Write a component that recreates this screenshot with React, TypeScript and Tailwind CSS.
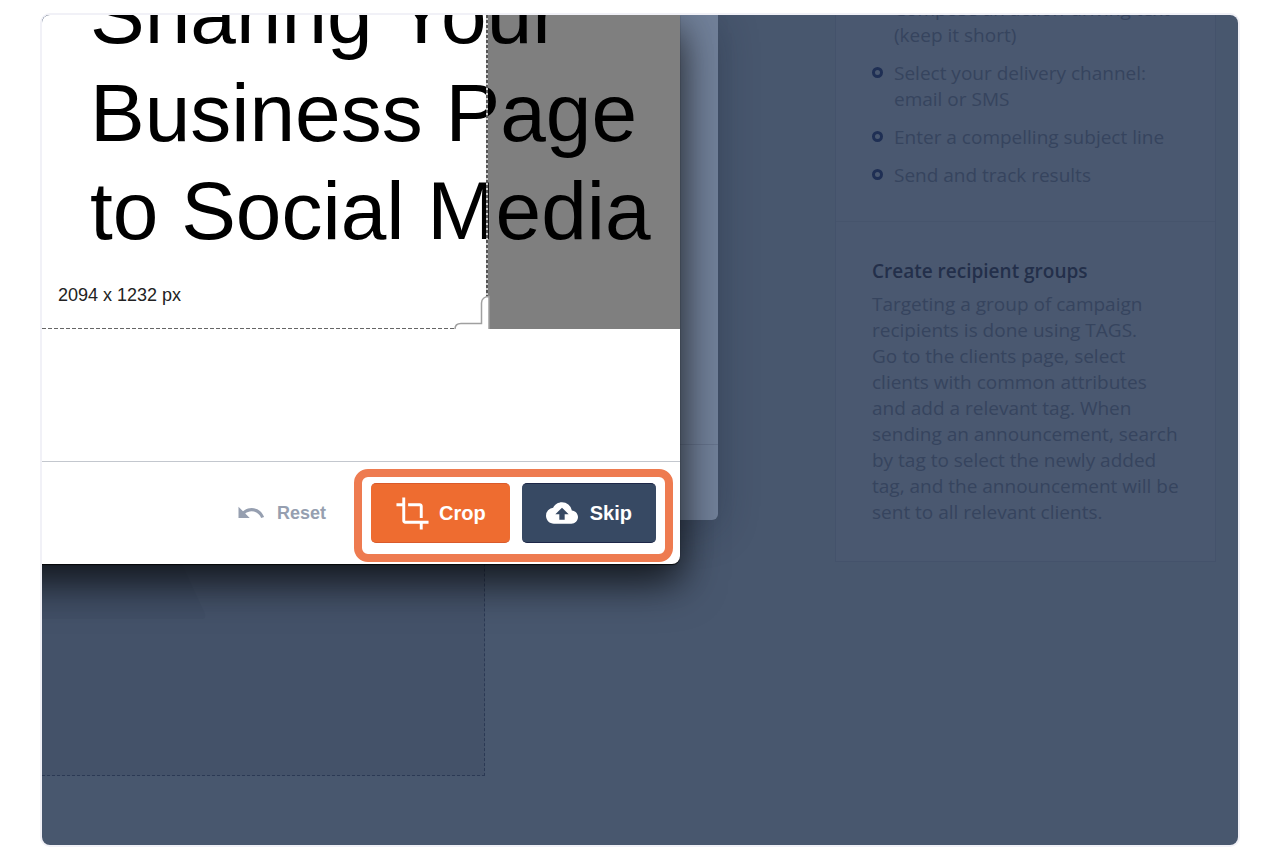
import { MdCloudUpload, MdCrop, MdUndo } from "react-icons/md";

const tips = [
  "Compose an action-driving text\n(keep it short)",
  "Select your delivery channel:\nemail or SMS",
  "Enter a compelling subject line",
  "Send and track results",
];

const groupsText = `Targeting a group of campaign
recipients is done using TAGS.
Go to the clients page, select
clients with common attributes
and add a relevant tag. When
sending an announcement, search
by tag to select the newly added
tag, and the announcement will be
sent to all relevant clients.`;

function Sidebar() {
  return (
    <aside className="mr-[22px] w-[381px] shrink-0 border-x border-b border-[#44526b] bg-[#4a5870] text-[19px] leading-[26px] text-[#36445e]">
      <section className="flex h-[207px] flex-col justify-end overflow-hidden border-b border-[#46546c] px-9 pb-[33px]">
        <ul className="flex flex-col gap-3">
          {tips.map((tip) => (
            <li key={tip} className="flex gap-[11px]">
              <span className="mt-[7px] size-[11px] shrink-0 rounded-full border-3 border-[#1f2f54]" />
              <span className="whitespace-pre">{tip}</span>
            </li>
          ))}
        </ul>
      </section>
      <section className="px-9 py-9">
        <h2 className="font-semibold text-[#232f4a]">Create recipient groups</h2>
        <p className="mt-[7px] whitespace-pre">{groupsText}</p>
      </section>
    </aside>
  );
}

function CropArea() {
  return (
    <div className="relative h-[314px] overflow-hidden">
      <div className="flex h-full flex-col justify-end">
        <h1 className="pl-[48px] text-[82px] leading-[98px] whitespace-pre text-black">
          {"Sharing Your\nBusiness Page\nto Social Media"}
        </h1>
        <p className="mt-[22px] mb-[20px] pl-4 text-[18px] leading-[27px] text-[#222]">2094 x 1232 px</p>
      </div>
      <div className="absolute inset-0 flex">
        <div className="relative flex-1">
          <div className="absolute inset-x-0 bottom-0 h-px bg-[repeating-linear-gradient(90deg,#666_0_4px,#fff_4px_6px)]" />
          <div className="absolute inset-y-0 right-0 w-[2px] bg-[repeating-linear-gradient(180deg,#555_0_3px,#ccc_3px_5px)]" />
          <svg
            className="absolute -right-[2px] bottom-0"
            width="36"
            height="34"
            viewBox="0 0 36 34"
            aria-hidden="true"
          >
            <path
              d="M1 34C1 30.500 3.500 28.500 7 28.500H27.500V8C27.500 4 30.500 1.500 35 1.500V34Z"
              fill="#fff"
            />
            <path
              d="M1 34C1 30.500 3.500 28.500 7 28.500H27.500V8C27.500 4 30.500 1.500 35 1.500V34"
              fill="none"
              stroke="#a0a0a0"
              strokeWidth="1.500"
            />
          </svg>
        </div>
        <div className="w-[192px] bg-black/50" />
      </div>
    </div>
  );
}

function CropDialog() {
  return (
    <div
      role="dialog"
      aria-label="Crop image"
      className="absolute top-0 -left-20 w-[718px] rounded-br-lg bg-white pl-20 font-['Liberation_Sans',Arial,sans-serif] shadow-[0_1px_1px_rgba(0,0,0,0.8),0_18px_44px_rgba(0,0,0,0.6),0_14px_32px_rgba(0,0,0,0.3)]"
    >
      <CropArea />
      <div className="mt-[132px] flex items-start justify-end border-t border-[#c3c7ce] pt-[7px] pr-[7px] pb-[2px]">
        <button
          type="button"
          className="mt-[14px] mr-7 flex h-[60px] items-center gap-[11px] text-[18px] font-bold text-[#969fb0]"
        >
          <MdUndo size={30} />
          Reset
        </button>
        <div className="flex gap-3 rounded-[14px] border-8 border-[#ee7b50] px-[9px] pt-[6px] pb-[11px]">
          <button
            type="button"
            className="flex h-[60px] items-center gap-[9px] rounded-[5px] border-y border-[#d95a2b] bg-[#ee6c30] px-6 text-[20px] font-bold text-white"
          >
            <MdCrop size={35} />
            Crop
          </button>
          <button
            type="button"
            className="flex h-[60px] items-center gap-3 rounded-[5px] border-y border-[#1d2748] bg-[#374963] px-6 text-[20px] font-bold text-white"
          >
            <MdCloudUpload size={32} />
            Skip
          </button>
        </div>
      </div>
    </div>
  );
}

export default function App() {
  return (
    <div className="flex min-h-screen flex-col bg-white pt-[13px] pr-[22px] pb-[11px] pl-10 font-['Open_Sans',sans-serif]">
      <main className="flex-1 rounded-[10px] border-2 border-[#f1f1f7]">
        <div className="relative flex h-full min-h-[830px] items-start justify-between overflow-hidden rounded-lg bg-[#48576e]">
          <div className="flex h-[761px] w-[443px] flex-col border-r border-b border-dashed border-[#2b3954] bg-[#445269]">
            <svg className="mt-[545px]" width="166" height="60" viewBox="0 0 166 60" aria-hidden="true">
              <path d="M0 0H138L163 54Q164 59 160 59H0Z" fill="#414f66" />
            </svg>
          </div>
          <Sidebar />
          <div className="absolute top-0 left-0 flex h-[505px] w-[676px] flex-col justify-end rounded-br-md bg-[#718099] shadow-[0_8px_40px_rgba(20,30,50,0.3)]">
            <div className="h-[76px] border-t border-[#65738c]" />
          </div>
          <CropDialog />
        </div>
      </main>
    </div>
  );
}
